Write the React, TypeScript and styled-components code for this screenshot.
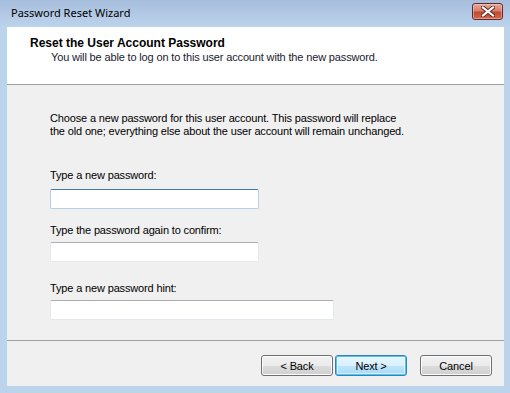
import React from 'react';
import styled, { createGlobalStyle } from 'styled-components';

const GlobalStyle = createGlobalStyle`
  html, body {
    margin: 0;
    padding: 0;
    background: #bcd3ec;
  }
  body {
    font-family: "Liberation Sans", Arial, sans-serif;
    font-size: 11px;
    letter-spacing: -0.15px;
    color: #000;
  }
`;

const Window = styled.div`
  width: 510px;
  height: 393px;
  display: flex;
  flex-direction: column;
  background: #bcd3ec;
  box-sizing: border-box;
`;

const TitleBar = styled.div`
  height: 27px;
  flex: none;
  display: flex;
  align-items: center;
  justify-content: space-between;
  padding: 0 7px 0 11px;
  background: linear-gradient(to bottom, #a6bedc 0%, #b4cae6 60%, #bcd3ec 100%);
  box-sizing: border-box;
`;

const Caption = styled.span`
  font-family: "Noto Sans", "Open Sans", sans-serif;
  font-size: 11px;
  letter-spacing: 0;
  color: #000;
  margin-top: -3px;
`;

const CloseButton = styled.div`
  width: 31px;
  height: 17px;
  margin-top: -4px;
  display: flex;
  align-items: center;
  justify-content: center;
  border: 1px solid #5e2a26;
  border-radius: 3px;
  box-sizing: border-box;
  background: linear-gradient(to bottom, #e6a89c 0%, #d77f6c 45%, #c24a32 55%, #cf6a4f 100%);
  box-shadow: inset 0 0 0 1px rgba(255, 220, 210, 0.45);
`;

const Client = styled.div`
  flex: 1;
  margin: 0 6px 7px 7px;
  display: flex;
  flex-direction: column;
  background: #f0f0f0;
`;

const Header = styled.div`
  height: 58px;
  flex: none;
  background: #fff;
  border-bottom: 1px solid #a0a0a0;
  padding: 9px 0 0 23px;
  box-sizing: border-box;
`;

const HeaderTitle = styled.div`
  font-weight: bold;
  font-size: 12px;
  letter-spacing: 0;
  line-height: 14px;
`;

const HeaderSub = styled.div`
  font-size: 11px;
  line-height: 15px;
  padding-left: 21px;
  color: #1a1a2e;
`;

const Body = styled.div`
  flex: 1;
  display: flex;
  flex-direction: column;
  align-items: flex-start;
  padding: 27px 0 0 43px;
  border-bottom: 1px solid #a0a0a0;
`;

const Intro = styled.p`
  margin: 0;
  font-size: 11px;
  line-height: 13px;
`;

const Label = styled.label<{ $top: number }>`
  display: block;
  margin-top: ${(p) => p.$top}px;
  font-size: 11px;
  line-height: 13px;
`;

const TextBox = styled.input<{ $width: number; $top: number; $focused?: boolean }>`
  display: block;
  width: ${(p) => p.$width}px;
  height: 20px;
  margin: ${(p) => p.$top}px 0 0;
  padding: 0 3px;
  box-sizing: border-box;
  background: #fff;
  border: 1px solid ${(p) => (p.$focused ? '#b5cfe7' : '#e3e9ef')};
  border-top-color: ${(p) => (p.$focused ? '#3d7bad' : '#abadb3')};
  border-radius: 2px;
  outline: none;
  font-family: inherit;
  font-size: 11px;
`;

const Footer = styled.div`
  height: 45px;
  flex: none;
  display: flex;
  align-items: flex-start;
  justify-content: flex-end;
  padding: 14px 12px 0 0;
  box-sizing: border-box;
`;

const Button = styled.button<{ $default?: boolean; $gap: number }>`
  width: 72px;
  height: 21px;
  margin-left: ${(p) => p.$gap}px;
  padding: 0;
  border-radius: 3px;
  box-sizing: border-box;
  font-family: "Liberation Sans", Arial, sans-serif;
  font-size: 11px;
  letter-spacing: -0.15px;
  color: #000;
  border: 1px solid ${(p) => (p.$default ? '#3c7fb1' : '#707070')};
  background: ${(p) =>
    p.$default
      ? 'linear-gradient(to bottom, #eaf6fd 0%, #d9f0fc 50%, #bee6fd 51%, #a7d9f5 100%)'
      : 'linear-gradient(to bottom, #f2f2f2 0%, #ebebeb 50%, #dddddd 51%, #cfcfcf 100%)'};
  box-shadow: ${(p) =>
    p.$default ? 'inset 0 0 0 1px #48c8f5, inset 0 0 0 2px rgba(255,255,255,0.5)' : 'inset 0 0 0 1px #fcfcfc'};
`;

export default function App() {
  return (
    <>
      <GlobalStyle />
      <Window>
        <TitleBar>
          <Caption>Password Reset Wizard</Caption>
          <CloseButton>
            <svg width="14" height="11" viewBox="0 0 14 11">
              <path
                d="M2 1.5 L12 9.5 M12 1.5 L2 9.5"
                stroke="#5a2520"
                strokeWidth="4"
                strokeLinecap="square"
              />
              <path
                d="M2 1.5 L12 9.5 M12 1.5 L2 9.5"
                stroke="#fff"
                strokeWidth="2.2"
                strokeLinecap="square"
              />
            </svg>
          </CloseButton>
        </TitleBar>
        <Client>
          <Header>
            <HeaderTitle>Reset the User Account Password</HeaderTitle>
            <HeaderSub>You will be able to log on to this user account with the new password.</HeaderSub>
          </Header>
          <Body>
            <Intro>
              Choose a new password for this user account. This password will replace
              <br />
              the old one; everything else about the user account will remain unchanged.
            </Intro>
            <Label $top={31}>Type a new password:</Label>
            <TextBox type="password" $width={209} $top={7} $focused />
            <Label $top={15}>Type the password again to confirm:</Label>
            <TextBox type="password" $width={209} $top={5} />
            <Label $top={20}>Type a new password hint:</Label>
            <TextBox type="text" $width={284} $top={5} />
          </Body>
          <Footer>
            <Button $gap={0}>&lt; Back</Button>
            <Button $gap={2} $default>
              Next &gt;
            </Button>
            <Button $gap={13}>Cancel</Button>
          </Footer>
        </Client>
      </Window>
    </>
  );
}
